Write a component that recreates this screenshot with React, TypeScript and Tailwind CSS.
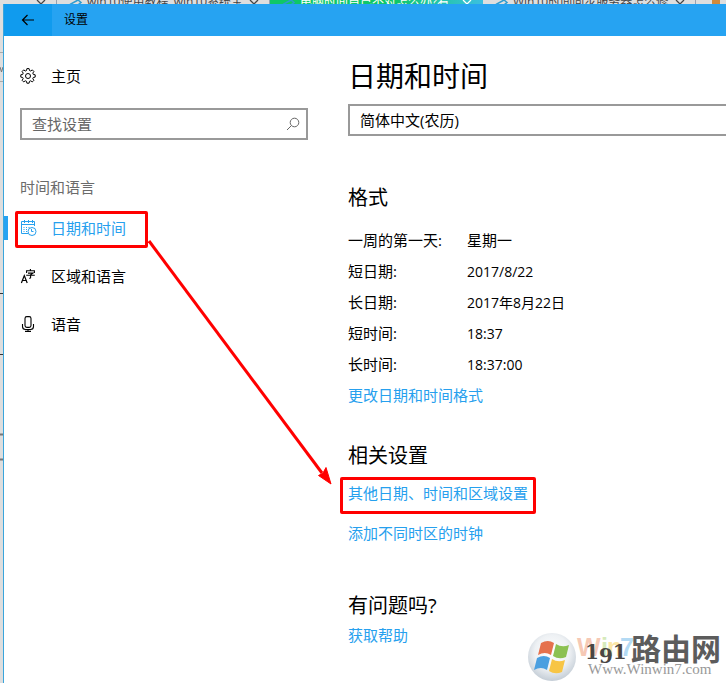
import { useState } from 'react';
import type { ReactNode } from 'react';

const TABS = [
  { title: 'win10使用教程_win10系统宝..', active: false },
  { title: '电脑时间自己不对怎么办?看..', active: true },
  { title: 'Win10时间同步服务器怎么修..', active: false },
];

const FORMATS = [
  { label: '一周的第一天:', value: '星期一', size: 'text-[15px]' },
  { label: '短日期:', value: '2017/8/22', size: 'text-sm' },
  { label: '长日期:', value: '2017年8月22日', size: 'text-sm' },
  { label: '短时间:', value: '18:37', size: 'text-sm' },
  { label: '长时间:', value: '18:37:00', size: 'text-sm' },
];

const CloseIcon = () => (
  <svg viewBox="0 0 10 10" className="w-2.5 h-2.5 shrink-0" fill="none" stroke="currentColor" strokeWidth="1.3">
    <path d="M1 0l8 8M9 0L1 8" />
  </svg>
);

const GearIcon = () => (
  <svg viewBox="0 0 16 16" className="w-4 h-4 shrink-0" fill="none" stroke="currentColor" strokeWidth="1" strokeLinejoin="round">
    <path d="M6.9.6h2.2l.4 1.9 1.2.5 1.6-1.1 1.6 1.6-1.1 1.6.5 1.3 1.9.4v2.3l-1.9.4-.5 1.2 1.1 1.6-1.6 1.6-1.6-1.1-1.2.5-.4 1.9H6.9l-.4-1.9-1.2-.5-1.6 1.1-1.6-1.6 1.1-1.6-.5-1.2L.8 9.1V6.8l1.9-.4.5-1.3-1.1-1.6 1.6-1.6L5.3 3l1.2-.5z" />
    <circle cx="8" cy="8" r="2.5" />
  </svg>
);

const CalendarClockIcon = () => (
  <svg viewBox="0 0 16 16" className="w-4 h-4 shrink-0 overflow-visible" fill="none" stroke="currentColor" strokeWidth="1">
    <path d="M8 13.5H1.5v-12h13V6M1.5 4.5h13M4.5 0v3M8.500 0v3M12.500 0v3" />
    <path d="M3.500 7.500h1M6 7.500h1M8.500 7.500h1M3.500 9.500h1M6 9.500h1M3.500 11.500h1M6 11.500h1" />
    <circle cx="12" cy="11.500" r="4" />
    <path d="M11.500 9v2.500h2" />
  </svg>
);

const LanguageIcon = () => (
  <svg viewBox="0 0 16 16" className="w-4 h-4 shrink-0 overflow-visible" fill="none" stroke="currentColor" strokeWidth="1.2">
    <path d="M1.4 15 4.3 7.6 7.2 15M2.4 12.5h3.8" />
    <path d="M10.4 1v1.6M6.6 5V2.8h7.8V5M8 5.1h5l-2.4 1.7v2.6q0 1-1.4.9M6.2 7.3h8.6" strokeWidth="1.1" />
  </svg>
);

const MicIcon = () => (
  <svg viewBox="0 0 16 16" className="w-4 h-4 shrink-0" fill="none" stroke="currentColor" strokeWidth="1.1">
    <rect x="5" y=".6" width="6" height="10.8" rx="1.8" />
    <path d="M2.5 8v2.5q0 3 3 3h5q3 0 3-3V8M8 13.5v2M5 15.4h6" />
  </svg>
);

const Watermark = () => (
  <svg viewBox="0 0 200 56" className="absolute right-0 bottom-0 w-[200px] h-14 pointer-events-none">
    <defs>
      <radialGradient id="orb" cx="0.5" cy="0.4" r="0.6">
        <stop offset="0" stopColor="#ffffff" />
        <stop offset="0.6" stopColor="#eef1f4" />
        <stop offset="1" stopColor="#c4cdd6" />
      </radialGradient>
    </defs>
    <circle cx="26" cy="30" r="24" fill="url(#orb)" />
    <path d="M15 16q7-4 13 0l-3 12q-6-4-13 0z" fill="#e5714d" />
    <path d="M30 17q6 4 13 1l-3 12q-7 3-13-1z" fill="#8cc152" />
    <path d="M11 31q7-4 13 0l-3 12q-6-4-13 0z" fill="#4a9fe0" />
    <path d="M26 32q6 4 13 1l-3 12q-7 3-13-1z" fill="#f7c545" />
    <g fontFamily="'Liberation Sans', sans-serif" fontWeight="700" fontSize="25">
      <text x="51" y="29" fill="#f6c9b5">W</text>
      <text x="75" y="29" fill="#d6eabb">i</text>
      <text x="81" y="29" fill="#fbe6a6">n</text>
      <text x="94" y="29" fill="#b3daf4">7</text>
    </g>
    <text x="59" y="32" fontFamily="'DejaVu Serif', serif" fontWeight="700" fontSize="20" fill="#4a4643">
      1<tspan dy="4">9</tspan>
      <tspan dy="-4">1</tspan>
    </text>
    <text x="105" y="33" fontFamily="'Noto Sans CJK SC', sans-serif" fontWeight="700" fontSize="30" fill="#5c5c5c">路由网</text>
    <text x="62" y="47" fontFamily="'Liberation Serif', serif" fontSize="15" fill="#999999">Www.Winwin7.com</text>
  </svg>
);

type NavItemProps = {
  icon: ReactNode;
  label: string;
  active: boolean;
  marked?: boolean;
  onClick: () => void;
};

const NavItem = ({ icon, label, active, marked, onClick }: NavItemProps) => (
  <button
    onClick={onClick}
    className={`relative h-12 flex items-center text-left ${active ? 'text-[#26a0ee]' : 'text-black'}`}
  >
    <span className={`w-1 h-6 ${active ? 'bg-[#26a3f2]' : ''}`} />
    <span className="pl-3 flex items-center gap-[15px]">
      {icon}
      {label}
    </span>
    {marked && <span className="absolute left-[11px] top-[7px] w-[133px] h-[37px] border-3 border-[#ff0000] rounded-xs" />}
  </button>
);

export default function App() {
  const [section, setSection] = useState('datetime');
  const [calendar, setCalendar] = useState('lunar');

  return (
    <div className="min-h-screen flex flex-col overflow-hidden bg-[#dedede] text-[15px] text-black font-['Open_Sans','Noto_Sans_CJK_SC',sans-serif]">
      {/* Browser tabs behind the window */}
      <div className="h-1 flex overflow-hidden text-xs leading-none text-[#444]">
        <div className="w-[57px] shrink-0 flex items-start justify-end pr-2.5 border-r border-gray-400">
          <CloseIcon />
        </div>
        {TABS.map((tab) => (
          <div
            key={tab.title}
            className={`w-[213px] shrink-0 flex items-start pl-3 pr-2.5 gap-1 whitespace-nowrap border-r ${
              tab.active ? 'bg-linear-to-r from-[#0fc768] from-60% to-[#3bbfe0] text-white border-[#3bbfe0]' : 'border-gray-400'
            }`}
          >
            <svg viewBox="0 0 14 12" className="w-3.5 h-3 shrink-0" fill="none" stroke="#2d9cd0" strokeWidth="1.5">
              <path d="M1 4.5 9 0l3 2.5-5 4" />
            </svg>
            <span className="h-1 flex items-center flex-1 min-w-0">{tab.title}</span>
            <CloseIcon />
          </div>
        ))}
        <div className="pl-4 flex items-center">
          <span className="w-2 h-3 bg-[#d18a3a]" />
        </div>
      </div>

      <div className="flex-1 flex">
        {/* Page edge left of the window */}
        <svg className="w-[3px] shrink-0" stroke="#333">
          <path d="M0 289.5h3M0 350.5h3" />
          <path d="M0 48.5h3M0 77.5h3" stroke="#aaa" />
          <path d="M0 430.5h3M0 455.5h3" stroke="#777" strokeWidth="2" />
          <path d="M0 63l1.5 5L3 63" fill="none" stroke="#777" />
        </svg>

        <div className="relative flex-1 flex flex-col bg-white border-l border-[#3aa5dc]">
          <header className="h-8 flex items-center bg-[#26a3f2]">
            <button aria-label="返回" className="w-12 h-8 flex items-center justify-center bg-[#109bee]">
              <svg viewBox="0 0 14 12" className="w-3.5 h-3" fill="none" stroke="#000" strokeWidth="1.2">
                <path d="M13 6H1.5M6.5 1 1.5 6l5 5" />
              </svg>
            </button>
            <h1 className="pl-3 text-xs">设置</h1>
          </header>

          <div className="flex-1 flex">
            <aside className="w-[304px] shrink-0 pt-4 flex flex-col">
              <button className="h-12 pl-4 flex items-center gap-[15px]">
                <GearIcon />
                主页
              </button>

              <label className="mt-2 ml-4 h-8 flex items-center px-2.5 border-2 border-[#999]">
                <input
                  type="text"
                  aria-label="查找设置"
                  placeholder="查找设置"
                  className="flex-1 min-w-0 outline-none placeholder:text-[#666]"
                />
                <svg viewBox="0 0 14 14" className="-mr-1 w-3.5 h-3.5" fill="none" stroke="#666" strokeWidth="1">
                  <circle cx="8.5" cy="5.5" r="4.3" />
                  <path d="M5.4 8.6 1 13" />
                </svg>
              </label>

              <h2 className="mt-[35px] mb-[5px] pl-4 leading-6 text-[#6b6b6b]">时间和语言</h2>
              <nav className="flex flex-col">
                <NavItem
                  icon={<CalendarClockIcon />}
                  label="日期和时间"
                  active={section === 'datetime'}
                  marked
                  onClick={() => setSection('datetime')}
                />
                <NavItem
                  icon={<LanguageIcon />}
                  label="区域和语言"
                  active={section === 'region'}
                  onClick={() => setSection('region')}
                />
                <NavItem icon={<MicIcon />} label="语音" active={section === 'speech'} onClick={() => setSection('speech')} />
              </nav>
            </aside>

            <main className="flex-1 min-w-0 pl-10 pt-5 flex flex-col items-start">
              <h2 className="text-[28px] leading-10">日期和时间</h2>
              <select
                aria-label="日历"
                value={calendar}
                onChange={(e) => setCalendar(e.target.value)}
                className="mt-2 w-full h-8 pl-2.5 appearance-none bg-white border-2 border-r-0 border-[#999]"
              >
                <option value="lunar">简体中文(农历)</option>
                <option value="gregorian">简体中文(公历)</option>
              </select>

              <h3 className="mt-12 text-xl leading-7">格式</h3>
              <dl className="mt-[13px]">
                {FORMATS.map((row) => (
                  <div key={row.label} className="h-[31px] flex items-center">
                    <dt className="w-[119px]">{row.label}</dt>
                    <dd className={row.size}>{row.value}</dd>
                  </div>
                ))}
              </dl>
              <a href="#format" className="leading-[30px] text-[#26a0ee]">更改日期和时间格式</a>

              <h3 className="mt-8 text-xl leading-7">相关设置</h3>
              <a href="#region" className="relative mt-2 leading-[30px] text-[#26a0ee]">
                其他日期、时间和区域设置
                <span className="absolute -inset-x-2 -top-px -bottom-1.5 border-3 border-[#ff0000] rounded-xs" />
              </a>
              <a href="#clocks" className="mt-2.5 leading-[30px] text-[#26a0ee]">添加不同时区的时钟</a>

              <h3 className="mt-11 text-xl leading-7">有问题吗?</h3>
              <a href="#help" className="leading-[30px] text-[#26a0ee]">获取帮助</a>
            </main>
          </div>

          {/* Arrow from the nav item to the link */}
          <svg viewBox="0 0 184 246" className="absolute left-[144px] top-[236px] w-[184px] h-[246px] pointer-events-none">
            <path d="M1 1 174 233" stroke="#ff0000" strokeWidth="3" />
            <path d="M183 244 170.5 235.5 175 233 178 227.5z" fill="#ff0000" stroke="#ff0000" />
          </svg>
          <Watermark />
        </div>
      </div>
    </div>
  );
}
